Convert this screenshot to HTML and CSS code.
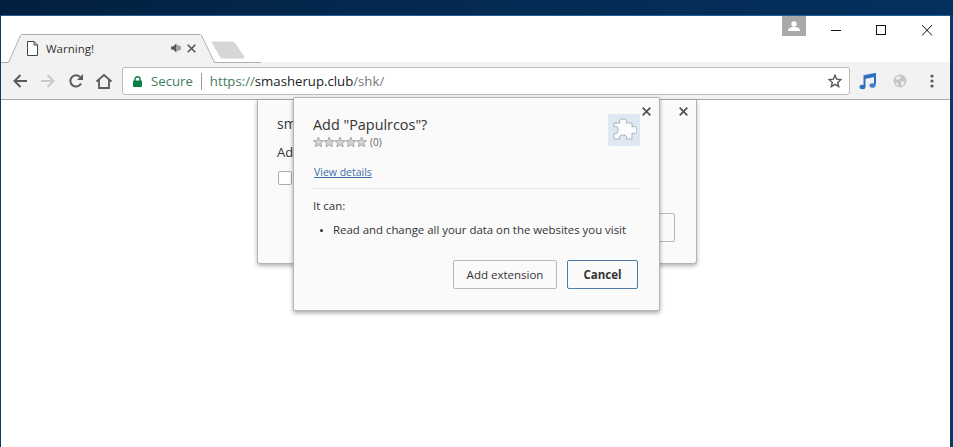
FILE: index.html
```html
<!DOCTYPE html>
<html lang="en">
<head>
<meta charset="utf-8">
<title>Warning!</title>
<link rel="stylesheet" href="styles.css">
</head>
<body>
<div class="wallpaper"></div>
<div class="window">
  <header class="tabstrip">
    <svg class="tabshape" width="260" height="47" viewBox="0 0 260 47">
      <path d="M0 46.5H7.5L19.5 19.5Q20 18.5 22 18.5H198Q200 18.5 200.5 19.5L213.5 46.5H260V47H0Z" fill="#f2f2f2"/>
      <path d="M0 46.5H7.5L19.5 19.5Q20 18.5 22 18.5H198Q200 18.5 200.5 19.5L213.5 46.5H260" fill="none" stroke="#aeaeae"/>
      <path d="M211 27Q210 25.500 212 25.500H231Q233 25.500 234 27L243 40Q244 42.500 242 42.500H222Q220 42.500 219 41Z" fill="#d6d6d6"/>
    </svg>
    <div class="tab">
      <svg class="tab-doc" width="11" height="15" viewBox="0 0 11 15"><path d="M.5.5H7L10.500 4V14.500H.5ZM7 .5V4H10.500" fill="#fff" stroke="#444"/></svg>
      <span class="tab-title">Warning!</span>
      <svg class="tab-sound" width="10" height="10" viewBox="0 0 10 10"><path d="M0 3.500H2L5.500 .5V9.500L2 6.500H0Z" fill="#555"/><path d="M7 2V8M9 3V7" stroke="#555"/></svg>
      <svg class="tab-close" width="9" height="9" viewBox="0 0 9 9"><path d="M.7.7L8.300 8.300M8.300.7L.7 8.300" stroke="#555" stroke-width="1.600"/></svg>
    </div>
    <div class="profile">
      <svg width="12" height="10" viewBox="0 0 12 10"><circle cx="6" cy="3" r="2.700" fill="#fff"/><path d="M0 10V8.500Q1 6.500 4 6H8Q11 6.500 12 8.500V10Z" fill="#fff"/></svg>
    </div>
    <div class="winctl">
      <svg width="46" height="30" viewBox="0 0 46 30"><path d="M18 14.500H28" stroke="#111"/></svg>
      <svg width="46" height="30" viewBox="0 0 46 30"><rect x="18.500" y="9.500" width="9" height="9" fill="none" stroke="#111"/></svg>
      <svg width="46" height="30" viewBox="0 0 46 30"><path d="M18 9L28 19.500M28 9L18 19.500" stroke="#111"/></svg>
    </div>
  </header>
  <nav class="toolbar">
    <svg class="tool" width="14" height="14" viewBox="0 0 14 14"><path d="M14 7H1.500M7.500 1L1.500 7L7.500 13" fill="none" stroke="#5a5a5a" stroke-width="2"/></svg>
    <svg class="tool" width="14" height="14" viewBox="0 0 14 14"><path d="M0 7H12.500M6.500 1L12.500 7L6.500 13" fill="none" stroke="#c9c9c9" stroke-width="2"/></svg>
    <svg class="tool" width="14" height="14" viewBox="0 0 14 14"><path d="M12 9.500A5.600 5.600 0 1 1 11 3" fill="none" stroke="#5a5a5a" stroke-width="2"/><path d="M14 0V6H8Z" fill="#5a5a5a"/></svg>
    <svg class="tool" width="16" height="15" viewBox="0 0 16 15"><path d="M.5 7.500L8 1L15.500 7.500M3 6V14H13V6" fill="none" stroke="#5a5a5a" stroke-width="1.800"/></svg>
    <div class="omnibox">
      <svg class="lock" width="9" height="11" viewBox="0 0 9 11"><path d="M2 5V3.200A2.500 2.500 0 0 1 7 3.200V5" fill="none" stroke="#0b8043" stroke-width="1.400"/><rect y="4.500" width="9" height="6.500" rx=".8" fill="#0b8043"/></svg>
      <span class="secure">Secure</span>
      <span class="omni-sep"></span>
      <span class="url"><span class="url-scheme">https://</span><span class="url-host">smasherup.club</span><span class="url-path">/shk/</span></span>
      <svg class="star" width="14" height="14" viewBox="0 0 14 14"><path d="M7 1.300L8.700 5.200L12.900 5.600L9.700 8.400L10.700 12.600L7 10.400L3.300 12.600L4.300 8.400L1.100 5.600L5.300 5.200Z" fill="none" stroke="#555" stroke-width="1.400"/></svg>
    </div>
    <svg class="ext-music" width="18" height="17" viewBox="0 0 18 17"><path d="M5.500 13.500V3L16 1V11.500" fill="none" stroke="#2f6fc4" stroke-width="2"/><path d="M5.500 3L16 1V4L5.500 6Z" fill="#2f6fc4"/><ellipse cx="3.500" cy="14" rx="3" ry="2.200" fill="#2f6fc4"/><ellipse cx="13.500" cy="12.500" rx="3" ry="2.200" fill="#3f7fd0"/></svg>
    <svg class="ext-globe" width="14" height="14" viewBox="0 0 14 14"><circle cx="7" cy="7" r="6.500" fill="#c4c4c4"/><path d="M4 2L8 2.500L7 5L4 6L2.500 4.500ZM8 7L12 7.500L10 12L8 11ZM2 8L5 9L5.500 12L3.500 11Z" fill="#ededed"/></svg>
    <svg class="menu-dots" width="4" height="14" viewBox="0 0 4 14"><circle cx="2" cy="2" r="1.600" fill="#5a5a5a"/><circle cx="2" cy="7" r="1.600" fill="#5a5a5a"/><circle cx="2" cy="12" r="1.600" fill="#5a5a5a"/></svg>
  </nav>
  <main class="page">
    <section class="dialog-back">
      <svg class="close-back" width="9" height="9" viewBox="0 0 9 9"><path d="M.7.7L8.300 8.300M8.300.7L.7 8.300" stroke="#555" stroke-width="1.800"/></svg>
      <p class="back-title">sm</p>
      <p class="back-text">Ad</p>
      <span class="back-check"></span>
      <span class="back-button"></span>
    </section>
    <section class="dialog-front">
      <svg class="close-front" width="9" height="9" viewBox="0 0 9 9"><path d="M.7.7L8.300 8.300M8.300.7L.7 8.300" stroke="#555" stroke-width="1.800"/></svg>
      <div class="front-head">
        <div class="front-heading">
          <h1 class="front-title">Add "Papulrcos"?</h1>
          <div class="rating">
            <svg width="54" height="10" viewBox="0 0 54 10">
              <defs><path id="s" d="M5.400 0L6.800 3.500L10.500 3.800L7.700 6.200L8.600 9.800L5.400 7.900L2.200 9.800L3.100 6.200L.3 3.800L4 3.500Z" fill="#d4d4d4" stroke="#8f8f8f" stroke-width=".7"/></defs>
              <use href="#s"/><use href="#s" x="10.800"/><use href="#s" x="21.600"/><use href="#s" x="32.400"/><use href="#s" x="43.200"/>
            </svg>
            <span class="rating-count">(0)</span>
          </div>
        </div>
        <div class="ext-icon">
          <svg width="26" height="26" viewBox="0 0 26 26"><path d="M3 6H9Q7 2 12 2Q17 2 15 6H21V10Q26 8 26 13Q26 18 21 16V22H15Q17 18 12 18Q7 18 9 22H3V16Q7 18 7 13Q7 8 3 10Z" fill="#fbfcfe" stroke="#aab3c0"/></svg>
        </div>
      </div>
      <a class="details" href="#">View details</a>
      <hr class="rule">
      <p class="can">It can:</p>
      <ul class="perms"><li>Read and change all your data on the websites you visit</li></ul>
      <div class="actions">
        <button class="btn" type="button">Add extension</button>
        <button class="btn btn-primary" type="button">Cancel</button>
      </div>
    </section>
  </main>
</div>
</body>
</html>
```
FILE: styles.css
```css
* { box-sizing: border-box; }
html, body { height: 100%; margin: 0; }
body {
  display: flex;
  flex-direction: column;
  overflow: hidden;
  background: #0b3a68;
  font-family: "Open Sans", "Liberation Sans", sans-serif;
  color: #333;
}
.wallpaper {
  height: 15px;
  flex: none;
  background: linear-gradient(90deg, #021f3f 0%, #04294f 40%, #03305e 100%);
}
.window {
  flex: 1;
  display: flex;
  flex-direction: column;
  margin: 0 3px 0 1px;
  background: #fff;
  border-top: 1px solid #1f5e96;
}
.tabstrip {
  position: relative;
  height: 46px;
  flex: none;
  display: flex;
  align-items: flex-start;
  background: #fff;
}
.tabshape { position: absolute; left: 0; bottom: -1px; }
.tab {
  position: relative;
  width: 200px;
  margin: 24px 0 0 26px;
  display: flex;
  align-items: center;
  height: 16px;
}
.tab-title { margin-left: 8px; width: 125px; font-size: 11.500px; color: #333; }
.tab-close { margin-left: 6px; }
.profile {
  position: relative;
  margin-left: auto;
  width: 24px;
  height: 20px;
  background: #a9a9a9;
  display: flex;
  align-items: center;
  justify-content: center;
}
.winctl { position: relative; display: flex; width: 144px; justify-content: flex-end; }
.winctl svg { flex: none; }
.winctl svg:first-child { margin-right: -1px; }
.toolbar {
  height: 38px;
  flex: none;
  display: flex;
  align-items: center;
  background: #f2f2f2;
  border-bottom: 1px solid #a8a8a8;
  padding: 1px 0 0 12px;
}
.tool { flex: none; margin-right: 14px; }
.tool:nth-child(3) { margin-right: 13px; }
.tool:nth-child(4) { margin-right: 10px; }
.omnibox {
  width: 728px;
  height: 28px;
  flex: none;
  display: flex;
  align-items: center;
  background: #fff;
  border: 1px solid #bdbdbd;
  border-radius: 3px;
  padding: 0 7px 0 10px;
  font-size: 13.200px;
}
.secure { margin-left: 9px; color: #3f7d5e; }
.omni-sep { width: 1px; height: 17px; background: #9a9a9a; margin: 0 8px; }
.url { flex: 1; white-space: nowrap; }
.url-scheme { color: #3f7d5e; }
.url-host { color: #222; }
.url-path { color: #777; }
.ext-music { margin-left: 9px; flex: none; }
.ext-globe { margin-left: 16px; flex: none; }
.menu-dots { margin-left: 23px; flex: none; }
.page { position: relative; flex: 1; background: #fff; }
.dialog-back {
  position: absolute;
  left: 256px;
  top: 0;
  width: 440px;
  height: 164px;
  background: #fafafa;
  border: 1px solid #b3b3b3;
  border-top: 0;
  border-radius: 0 0 3px 3px;
  box-shadow: 0 2px 4px rgba(0,0,0,.3);
  padding: 14px 19px;
  font-size: 13px;
  color: #333;
}
.close-back { position: absolute; right: 8px; top: 7px; }
.back-title { margin: 0 0 10px; font-size: 14px; line-height: 19px; white-space: nowrap; }
.back-text { margin: 0 0 10px; line-height: 18px; }
.back-check { display: block; width: 14px; height: 14px; margin-left: 1px; background: #fff; border: 1px solid #aaa; border-radius: 2px; }
.back-button {
  position: absolute;
  right: 21px;
  top: 113px;
  width: 80px;
  height: 29px;
  background: #fafafa;
  border: 1px solid #b9b9b9;
  border-radius: 2px;
}
.dialog-front {
  position: absolute;
  left: 292px;
  top: -3px;
  width: 367px;
  height: 214px;
  background: #fafafa;
  border: 1px solid #b5b5b5;
  border-radius: 2px;
  box-shadow: 0 2px 4px rgba(0,0,0,.35);
  padding: 16px 20px 0 19px;
  font-size: 11.500px;
}
.close-front { position: absolute; right: 8px; top: 9px; }
.front-head { display: flex; justify-content: space-between; align-items: flex-start; }
.front-title { margin: 0; font-size: 14.400px; font-weight: 400; line-height: 21px; color: #333; white-space: nowrap; }
.rating { display: flex; align-items: center; height: 13px; }
.rating-count { margin-left: 3px; font-size: 10px; color: #666; }
.ext-icon {
  width: 32px;
  height: 32px;
  margin-right: -1px;
  background: #dfe7f3;
  border-radius: 2px;
  display: flex;
  align-items: center;
  justify-content: center;
}
.details { display: block; margin: 16px 0 0 1px; font-size: 10.500px; line-height: 16px; color: #3b6ea8; }
.rule { margin: 8px -1px 0 0; border: 0; border-top: 1px solid #e3e3e3; }
.can { margin: 9px 0 0; line-height: 16px; }
.perms { margin: 8px 0 0; padding: 0 0 0 20px; line-height: 16px; white-space: nowrap; font-size: 11.400px; }
.perms li::marker { font-size: 8px; }
.actions { display: flex; justify-content: flex-end; gap: 10px; margin: 22px 1px 0 0; }
.btn {
  height: 29px;
  width: 104px;
  padding: 0 0 1px;
  background: #fafafa;
  border: 1px solid #b9b9b9;
  border-radius: 2px;
  font: 11.500px "Open Sans", "Liberation Sans", sans-serif;
  color: #333;
}
.btn-primary { width: 71px; border-color: #4d7cab; font-weight: 700; }
```
